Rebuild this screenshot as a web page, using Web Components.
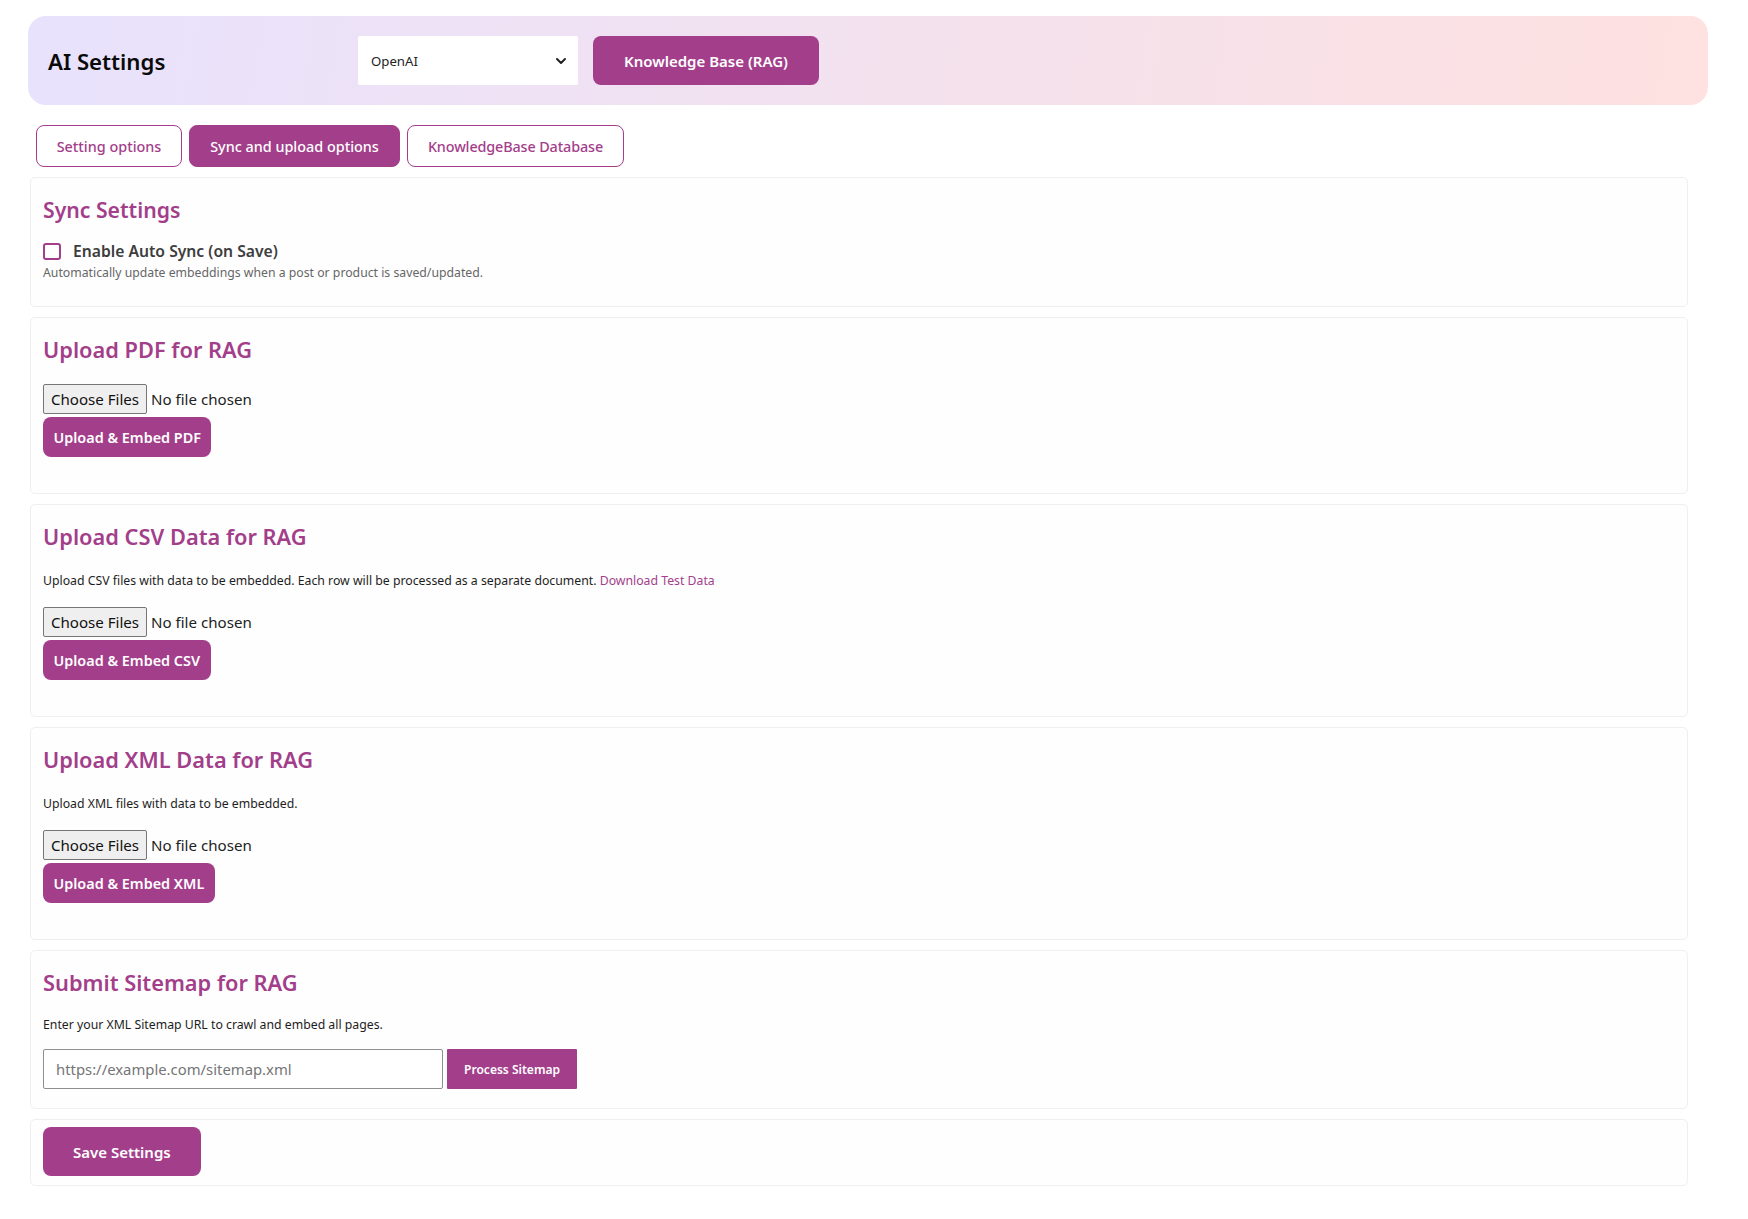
<!DOCTYPE html>
<html lang="en">
<head>
<meta charset="utf-8">
<title>AI Settings</title>
<style>
    html, body { margin: 0; background: #fff; }
    body { font-family: "Noto Sans", "Open Sans", sans-serif; color: #111; }
</style>
</head>
<body>
<ai-settings-page>
    <settings-header slot="header" title="AI Settings" provider="OpenAI" action="Knowledge Base (RAG)"></settings-header>
    <tab-bar slot="tabs">
        <tab-pill style="width:146px">Setting options</tab-pill>
        <tab-pill active style="width:211px">Sync and upload options</tab-pill>
        <tab-pill style="width:217px;letter-spacing:-.13px">KnowledgeBase Database</tab-pill>
    </tab-bar>

    <settings-card heading="Sync Settings" small style="--card-height:130px">
        <check-field label="Enable Auto Sync (on Save)" help="Automatically update embeddings when a post or product is saved/updated."></check-field>
    </settings-card>

    <settings-card heading="Upload PDF for RAG" style="--card-height:177px">
        <upload-field action="Upload &amp; Embed PDF" style="--top:16px"></upload-field>
    </settings-card>

    <settings-card heading="Upload CSV Data for RAG" style="--card-height:213px">
        <card-note>Upload CSV files with data to be embedded. Each row will be processed as a separate document. <a href="#">Download Test Data</a></card-note>
        <upload-field action="Upload &amp; Embed CSV"></upload-field>
    </settings-card>

    <settings-card heading="Upload XML Data for RAG" style="--card-height:213px">
        <card-note>Upload XML files with data to be embedded.</card-note>
        <upload-field action="Upload &amp; Embed XML"></upload-field>
    </settings-card>

    <settings-card heading="Submit Sitemap for RAG" style="--card-height:159px">
        <card-note style="--note-top:14px">Enter your XML Sitemap URL to crawl and embed all pages.</card-note>
        <sitemap-field></sitemap-field>
    </settings-card>

    <settings-card bare style="--card-height:67px">
        <action-button large>Save Settings</action-button>
    </settings-card>
</ai-settings-page>

<script>
const ACCENT = "#a33e8b"

class ActionButton extends HTMLElement {
    constructor() {
        super()
        this.attachShadow({ mode: "open" })
        this.shadowRoot.innerHTML = `
            <style>
                :host {
                    display: inline-flex;
                    align-items: center;
                    justify-content: center;
                    box-sizing: border-box;
                    height: 40px;
                    padding: 0 10.5px;
                    border-radius: 8px;
                    background: ${ACCENT};
                    color: #fff;
                    font-size: 14.4px;
                    font-weight: 600;
                    white-space: nowrap;
                }
                :host([large]) {
                    height: 49px;
                    padding: 0 30px;
                    font-size: 15px;
                }
                :host([square]) {
                    border-radius: 1px;
                    padding: 0 17px;
                    font-size: 12.05px;
                }
            </style>
            <slot></slot>
        `
    }
}

class SettingsHeader extends HTMLElement {
    constructor() {
        super()
        this.attachShadow({ mode: "open" })
    }

    connectedCallback() {
        this.shadowRoot.innerHTML = `
            <style>
                :host {
                    display: flex;
                    align-items: center;
                    box-sizing: border-box;
                    width: 1680px;
                    height: 89px;
                    padding-left: 20px;
                    border-radius: 18px;
                    background: linear-gradient(100deg, #e8e2fd 0%, #fee1e0 100%);
                }
                h1 {
                    width: 310px;
                    margin: 2px 0 0;
                    font-size: 22.2px;
                    font-weight: 600;
                    color: #0a0a0a;
                }
                .select {
                    display: flex;
                    align-items: center;
                    justify-content: space-between;
                    box-sizing: border-box;
                    width: 220px;
                    height: 49px;
                    padding: 0 11px 0 13px;
                    margin-right: 15px;
                    background: #fff;
                    border-radius: 2px;
                    font-size: 13.2px;
                    color: #222;
                }
                action-button { width: 226px; }
            </style>
            <h1>${this.getAttribute("title")}</h1>
            <div class="select" role="combobox">
                <span>${this.getAttribute("provider")}</span>
                <svg width="12" height="12" viewBox="0 0 12 12" fill="none" stroke="#222" stroke-width="2" stroke-linecap="round" stroke-linejoin="round"><path d="M2 4l4 4 4-4"/></svg>
            </div>
            <action-button large>${this.getAttribute("action")}</action-button>
        `
    }
}

class TabBar extends HTMLElement {
    constructor() {
        super()
        this.attachShadow({ mode: "open" })
        this.shadowRoot.innerHTML = `
            <style>
                :host {
                    display: flex;
                    gap: 7px;
                    margin: 20px 0 10px 8px;
                }
            </style>
            <slot></slot>
        `
    }
}

class TabPill extends HTMLElement {
    constructor() {
        super()
        this.attachShadow({ mode: "open" })
        this.shadowRoot.innerHTML = `
            <style>
                :host {
                    display: inline-flex;
                    align-items: center;
                    justify-content: center;
                    box-sizing: border-box;
                    height: 42px;
                    border: 1px solid ${ACCENT};
                    border-radius: 8px;
                    background: #fff;
                    color: ${ACCENT};
                    font-size: 14.4px;
                    font-weight: 500;
                    white-space: nowrap;
                }
                :host([active]) {
                    background: ${ACCENT};
                    color: #fff;
                }
            </style>
            <slot></slot>
        `
    }
}

class SettingsCard extends HTMLElement {
    constructor() {
        super()
        this.attachShadow({ mode: "open" })
    }

    connectedCallback() {
        const heading = this.getAttribute("heading")
        this.shadowRoot.innerHTML = `
            <style>
                :host {
                    display: block;
                    box-sizing: border-box;
                    width: 1658px;
                    height: var(--card-height);
                    margin: 0 0 10px 2px;
                    padding: 0 12px;
                    border: 1px solid #efefef;
                    border-radius: 5px;
                    background: #fefefe;
                }
                :host([bare]) { padding-top: 7px; }
                h2 {
                    margin: 0;
                    padding-top: 14px;
                    height: 36px;
                    line-height: 36px;
                    font-size: 21.8px;
                    font-weight: 600;
                    color: ${ACCENT};
                }
                :host([small]) h2 {
                    font-size: 21.2px;
                }
            </style>
            ${heading ? `<h2>${heading}</h2>` : ""}
            <slot></slot>
        `
    }
}

class CardNote extends HTMLElement {
    constructor() {
        super()
        this.attachShadow({ mode: "open" })
        this.shadowRoot.innerHTML = `
            <style>
                :host {
                    display: block;
                    margin-top: var(--note-top, 16px);
                    height: 20px;
                    line-height: 20px;
                    font-size: 12.27px;
                    color: #1d1d1d;
                }
                ::slotted(a) { color: ${ACCENT}; text-decoration: none; }
            </style>
            <slot></slot>
        `
    }
}

class CheckField extends HTMLElement {
    constructor() {
        super()
        this.attachShadow({ mode: "open" })
    }

    connectedCallback() {
        this.shadowRoot.innerHTML = `
            <style>
                :host { display: block; padding-top: 13px; }
                .row {
                    display: flex;
                    align-items: center;
                    gap: 12px;
                    height: 20px;
                    font-size: 15.7px;
                    font-weight: 600;
                    color: #3d3d3d;
                }
                .box {
                    box-sizing: border-box;
                    width: 18px;
                    height: 17px;
                    border: 2px solid ${ACCENT};
                    border-radius: 3px;
                    background: #fff;
                }
                p {
                    margin: 2px 0 0;
                    line-height: 20px;
                    font-size: 12.25px;
                    color: #666;
                }
            </style>
            <div class="row"><span class="box"></span><span>${this.getAttribute("label")}</span></div>
            <p>${this.getAttribute("help")}</p>
        `
    }
}

class UploadField extends HTMLElement {
    constructor() {
        super()
        this.attachShadow({ mode: "open" })
    }

    connectedCallback() {
        this.shadowRoot.innerHTML = `
            <style>
                :host {
                    display: block;
                    padding-top: var(--top, 16px);
                }
                .file {
                    display: flex;
                    align-items: center;
                    gap: 4px;
                    height: 30px;
                    margin-bottom: 3px;
                    font-size: 15.1px;
                    color: #222;
                }
                .choose {
                    display: flex;
                    align-items: center;
                    justify-content: center;
                    box-sizing: border-box;
                    width: 104px;
                    height: 30px;
                    border: 1px solid #767676;
                    border-radius: 2px;
                    background: #efefef;
                    color: #111;
                }
            </style>
            <div class="file"><span class="choose">Choose Files</span><span>No file chosen</span></div>
            <action-button>${this.getAttribute("action")}</action-button>
        `
    }
}

class SitemapField extends HTMLElement {
    constructor() {
        super()
        this.attachShadow({ mode: "open" })
        this.shadowRoot.innerHTML = `
            <style>
                :host {
                    display: flex;
                    gap: 4px;
                    margin-top: 14px;
                }
                input {
                    box-sizing: border-box;
                    width: 400px;
                    height: 40px;
                    padding: 0 12px;
                    border: 1px solid #8f8f8f;
                    border-radius: 2px;
                    font: 14.85px "Noto Sans", sans-serif;
                }
                input::placeholder { color: #757575; }
            </style>
            <input type="url" placeholder="https://example.com/sitemap.xml">
            <action-button square>Process Sitemap</action-button>
        `
    }
}

class AiSettingsPage extends HTMLElement {
    constructor() {
        super()
        this.attachShadow({ mode: "open" })
        this.shadowRoot.innerHTML = `
            <style>
                :host {
                    display: block;
                    padding: 16px 0 0 28px;
                }
            </style>
            <slot name="header"></slot>
            <slot name="tabs"></slot>
            <slot></slot>
        `
    }
}

customElements.define("action-button", ActionButton)
customElements.define("settings-header", SettingsHeader)
customElements.define("tab-bar", TabBar)
customElements.define("tab-pill", TabPill)
customElements.define("settings-card", SettingsCard)
customElements.define("card-note", CardNote)
customElements.define("check-field", CheckField)
customElements.define("upload-field", UploadField)
customElements.define("sitemap-field", SitemapField)
customElements.define("ai-settings-page", AiSettingsPage)
</script>
</body>
</html>
